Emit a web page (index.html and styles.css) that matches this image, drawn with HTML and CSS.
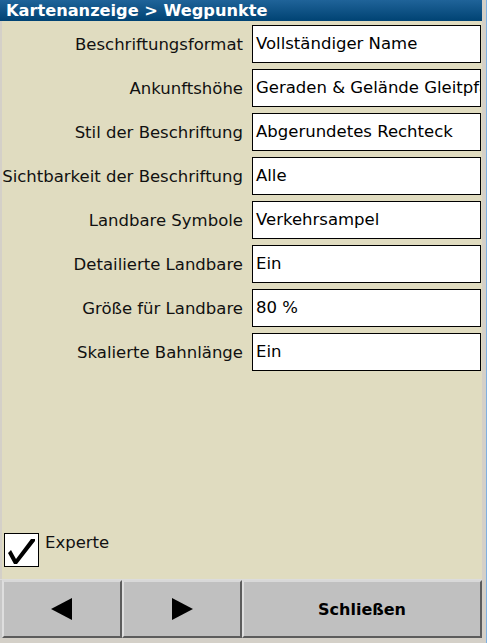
FILE: index.html
```html
<!DOCTYPE html>
<html>
<head>
<meta charset="utf-8">
<link rel="stylesheet" href="styles.css">
</head>
<body>
<div class="screen">
  <div class="main">
    <div class="title">Kartenanzeige &gt; Wegpunkte</div>
    <div class="content">
      <div class="rows">
        <div class="row"><div class="label">Beschriftungsformat</div><div class="field">Vollständiger Name</div></div>
        <div class="row"><div class="label">Ankunftshöhe</div><div class="field">Geraden &amp; Gelände Gleitpfad</div></div>
        <div class="row"><div class="label">Stil der Beschriftung</div><div class="field">Abgerundetes Rechteck</div></div>
        <div class="row"><div class="label">Sichtbarkeit der Beschriftung</div><div class="field">Alle</div></div>
        <div class="row"><div class="label">Landbare Symbole</div><div class="field">Verkehrsampel</div></div>
        <div class="row"><div class="label">Detailierte Landbare</div><div class="field">Ein</div></div>
        <div class="row"><div class="label">Größe für Landbare</div><div class="field">80 %</div></div>
        <div class="row"><div class="label">Skalierte Bahnlänge</div><div class="field">Ein</div></div>
      </div>
      <div class="expert">
        <div class="checkbox">
          <svg width="33" height="32" viewBox="0 0 33 32"><polygon points="3,19 6,16 11,25 26,5 30,5 30,7 12,30 9,30" fill="#000"/></svg>
        </div>
        <span class="expert-label">Experte</span>
      </div>
    </div>
    <div class="buttons">
      <div class="btn small"><svg width="22" height="22" viewBox="0 0 22 22"><polygon points="0,11 21,0 21,22" fill="#000"/></svg></div>
      <div class="btn small"><svg width="22" height="22" viewBox="0 0 22 22"><polygon points="1,0 22,11 1,22" fill="#000"/></svg></div>
      <div class="btn wide">Schließen</div>
    </div>
    <div class="foot"></div>
  </div>
  <div class="edge"></div>
</div>
</body>
</html>
```
FILE: styles.css
```css
html, body {
  margin: 0;
  padding: 0;
  background: #d4d0c8;
}
.screen {
  width: 487px;
  height: 643px;
  display: flex;
  font-family: "DejaVu Sans", sans-serif;
}
.main {
  width: 482px;
  display: flex;
  flex-direction: column;
}
.edge {
  width: 5px;
  background: linear-gradient(to right, #d4d0c8 0, #d4d0c8 4px, #7fb0e0 4px);
}
.title {
  height: 21px;
  line-height: 21px;
  background: linear-gradient(to bottom, #1f6399, #004373);
  color: #fff;
  font-weight: bold;
  font-size: 16.2px;
  padding-left: 6px;
}
.content {
  flex: 1;
  background: #e0dcc0;
  margin-left: 2px;
  display: flex;
  flex-direction: column;
  justify-content: space-between;
  padding-top: 4px;
}
.rows {
  display: flex;
  flex-direction: column;
  gap: 6px;
}
.row {
  display: flex;
  align-items: center;
  height: 38px;
}
.label {
  width: 241px;
  text-align: right;
  font-size: 16.5px;
  color: #111;
  padding-right: 9px;
  white-space: nowrap;
}
.field {
  width: 224px;
  height: 36px;
  border: 1px solid #000;
  background: #fff;
  font-size: 16.5px;
  color: #000;
  line-height: 36px;
  padding-left: 3px;
  white-space: nowrap;
  overflow: hidden;
}
.expert {
  display: flex;
  align-items: flex-start;
  padding-left: 2px;
  padding-bottom: 12px;
}
.checkbox {
  width: 33px;
  height: 32px;
  border: 1px solid #000;
  background: #fff;
}
.checkbox svg { display: block; }
.expert-label {
  font-size: 16.5px;
  color: #111;
  margin-left: 6px;
  margin-top: 0px;
}
.buttons {
  display: flex;
  height: 58px;
  background: #c8c8c8;
  padding-left: 2px;
  border-top: 1px solid #dcdcdc;
}
.btn {
  background: #c0c0c0;
  border-top: 2px solid #d8d8d8;
  border-left: 2px solid #dedede;
  border-right: 2px solid #5c5c5c;
  border-bottom: 2px solid #5c5c5c;
  display: flex;
  align-items: center;
  justify-content: center;
  box-sizing: border-box;
}
.small { width: 120px; }
.wide {
  flex: 1;
  font-weight: bold;
  font-size: 16px;
  color: #000;
}
.foot {
  height: 5px;
  background: #d4d0c8;
}
```
